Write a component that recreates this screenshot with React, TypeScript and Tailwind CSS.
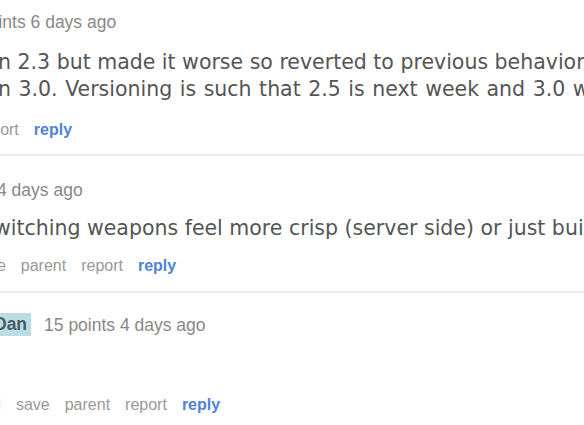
const meta = "font-['Liberation_Sans',Arial,sans-serif] text-[17.5px] leading-[20px] text-[#888] whitespace-nowrap"
const body = "font-['DejaVu_Sans',Verdana,sans-serif] text-[20.5px] leading-[27px] text-[#555] whitespace-nowrap"

function Actions({ items, offset }: { items: string[]; offset: string }) {
  return (
    <ul
      className={`flex items-center gap-[15px] whitespace-nowrap font-['Liberation_Sans',Arial,sans-serif] text-[16px] leading-[20px] ${offset}`}
    >
      {items.map((item) => (
        <li key={item} className="text-[#999]">
          {item}
        </li>
      ))}
      <li className="font-bold text-[#5182d6]">reply</li>
    </ul>
  )
}

function Divider() {
  return <div className="h-[2px] w-full bg-[#ececec]" />
}

export default function App() {
  return (
    <div className="w-[584px] h-[425px] overflow-hidden bg-white">
      {/* first comment */}
      <div className="pt-[12px] pb-[14px]">
        <p className={`${meta} ml-[-21px]`}>points 6 days ago</p>
        <div className={`${body} mt-[17px]`}>
          <p className="ml-[-2px]">n 2.3 but made it worse so reverted to previous behavior.</p>
          <p className="ml-[-2px] [word-spacing:1px]">n 3.0. Versioning is such that 2.5 is next week and 3.0 will follow.</p>
        </div>
        <div className="mt-[17px]">
          <Actions items={['report']} offset="ml-[-23px]" />
        </div>
      </div>
      <Divider />

      {/* second comment */}
      <div className="pt-[24px] pb-[15px]">
        <p className={`${meta} ml-[-3px]`}>4 days ago</p>
        <p className={`${body} mt-[15px] ml-[-6px]`}>
          witching weapons feel more crisp (server side) or just build side?
        </p>
        <div className="mt-[14px]">
          <Actions items={['save', 'parent', 'report']} offset="ml-[-28px]" />
        </div>
      </div>
      <Divider />

      {/* third comment */}
      <div className="pt-[20px]">
        <div className="flex items-center gap-[13px] ml-[-10px]">
          <span className="h-[23px] px-[4px] flex items-center bg-[#b8dde5] text-[#4a5a63] font-bold font-['Liberation_Sans',Arial,sans-serif] text-[17.5px]">
            Dan
          </span>
          <span className={meta}>15 points 4 days ago</span>
        </div>
        <div className="mt-[59px]">
          <Actions items={['embed', 'save', 'parent', 'report']} offset="ml-[-48px]" />
        </div>
      </div>
    </div>
  )
}
